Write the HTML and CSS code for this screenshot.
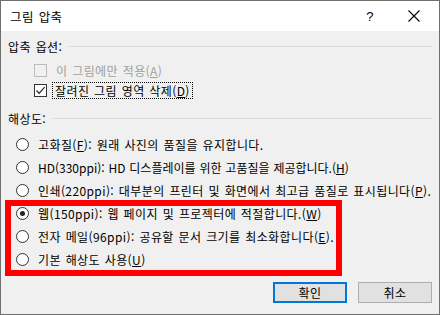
FILE: index.html
```html
<!DOCTYPE html>
<html lang="ko">
<head>
<meta charset="utf-8">
<link rel="stylesheet" href="styles.css">
</head>
<body>
<div class="window">
  <div class="titlebar">
    <span class="title">그림 압축</span>
    <span class="help">?</span>
    <span class="close">
      <svg width="12" height="12" viewBox="0 0 12 12"><path d="M0.5 0.5 L11.5 11.5 M11.5 0.5 L0.5 11.5" stroke="#000" stroke-width="1.1" fill="none"/></svg>
    </span>
  </div>
  <div class="content">
    <div class="group-head"><span>압축 옵션:</span></div>
    <div class="check-row disabled">
      <span class="checkbox"></span>
      <span class="label">이 그림에만 적용(<u>A</u>)</span>
    </div>
    <div class="check-row">
      <span class="checkbox">
        <svg width="11" height="11" viewBox="0 0 11 11"><path d="M1.5 5.5 L4.2 8.3 L9.6 2.2" stroke="#222" stroke-width="1.2" fill="none"/></svg>
      </span>
      <span class="label focus">잘려진 그림 영역 삭제(<u>D</u>)</span>
    </div>
    <div class="group-head second"><span>해상도:</span></div>
    <div class="radio-row"><span class="radio"></span><span class="label">고화질(<u>F</u>): 원래 사진의 품질을 유지합니다.</span></div>
    <div class="radio-row"><span class="radio"></span><span class="label tight">HD(330ppi): HD 디스플레이를 위한 고품질을 제공합니다.(<u>H</u>)</span></div>
    <div class="radio-row"><span class="radio"></span><span class="label">인쇄(220ppi): 대부분의 프린터 및 화면에서 최고급 품질로 표시됩니다(<u>P</u>).</span></div>
    <div class="radio-row"><span class="radio checked"></span><span class="label">웹(150ppi): 웹 페이지 및 프로젝터에 적절합니다.(<u>W</u>)</span></div>
    <div class="radio-row"><span class="radio"></span><span class="label">전자 메일(96ppi): 공유할 문서 크기를 최소화합니다(<u>E</u>).</span></div>
    <div class="radio-row"><span class="radio"></span><span class="label">기본 해상도 사용(<u>U</u>)</span></div>
    <div class="buttons">
      <button class="btn default">확인</button>
      <button class="btn">취소</button>
    </div>
    <div class="highlight"></div>
  </div>
</div>
</body>
</html>
```

FILE: styles.css
```css
html, body {
  margin: 0;
  padding: 0;
  background: #ffffff;
}
body {
  font-family: "Noto Sans CJK KR", "Noto Sans", sans-serif;
  font-size: 12px;
  color: #000;
  letter-spacing: 0.4px;
  word-spacing: 1px;
}
.window {
  width: 440px;
  height: 315px;
  box-sizing: border-box;
  border: 1px solid #6f6f6f;
  display: flex;
  flex-direction: column;
}
.titlebar {
  height: 30px;
  background: #fff;
  display: flex;
  align-items: center;
  padding-left: 9px;
  flex-shrink: 0;
}
.title {
  font-size: 12.5px;
  flex: 1;
}
.help {
  font-family: "Liberation Sans", sans-serif;
  font-size: 13px;
  margin-right: 34px;
}
.close {
  display: flex;
  margin-right: 19px;
}
.content {
  flex: 1;
  background: #f0f0f0;
  padding: 6px 7px 0 7px;
  position: relative;
}
.group-head {
  height: 18px;
  display: flex;
  align-items: center;
  gap: 6px;
}
.group-head::after {
  content: "";
  flex: 1;
  height: 1px;
  background: #dcdcdc;
}
.group-head.second {
  margin-top: 9px;
  margin-bottom: 6px;
}
.check-row {
  height: 20px;
  display: flex;
  align-items: center;
  padding-left: 26px;
}
.group-head + .check-row {
  margin-top: 5px;
}
.checkbox {
  width: 11px;
  height: 11px;
  border: 1px solid #333;
  background: #fff;
  display: flex;
  align-items: center;
  justify-content: center;
  margin-right: 9px;
}
.disabled .checkbox {
  border-color: #bcbcbc;
  background: #f0f0f0;
}
.disabled .label {
  color: #a0a0a0;
}
.label.focus {
  outline: 1px dotted #000;
  outline-offset: 0;
  padding: 0 2px;
  margin-left: -3px;
  line-height: 15px;
}
.label.tight {
  letter-spacing: 0;
  word-spacing: 0.5px;
}
.radio-row {
  height: 23px;
  display: flex;
  align-items: center;
  padding-left: 8px;
}
.radio {
  width: 11px;
  height: 11px;
  border: 1px solid #333;
  border-radius: 50%;
  background: #fff;
  margin-right: 9px;
  display: flex;
  align-items: center;
  justify-content: center;
  flex-shrink: 0;
}
.radio.checked::after {
  content: "";
  width: 5px;
  height: 5px;
  border-radius: 50%;
  background: #222;
}
.buttons {
  display: flex;
  justify-content: flex-end;
  gap: 11px;
  margin-top: 11px;
}
.btn {
  width: 74px;
  height: 21px;
  box-sizing: border-box;
  background: #e1e1e1;
  border: 1px solid #adadad;
  font-family: "Noto Sans CJK KR", sans-serif;
  font-size: 12px;
  letter-spacing: 0.4px;
  padding: 0;
  color: #000;
}
.btn.default {
  border: 2px solid #0078d7;
}
.highlight {
  position: absolute;
  left: 4px;
  top: 169px;
  width: 337px;
  height: 76px;
  box-sizing: border-box;
  border: 6px solid #ff0000;
}
```
